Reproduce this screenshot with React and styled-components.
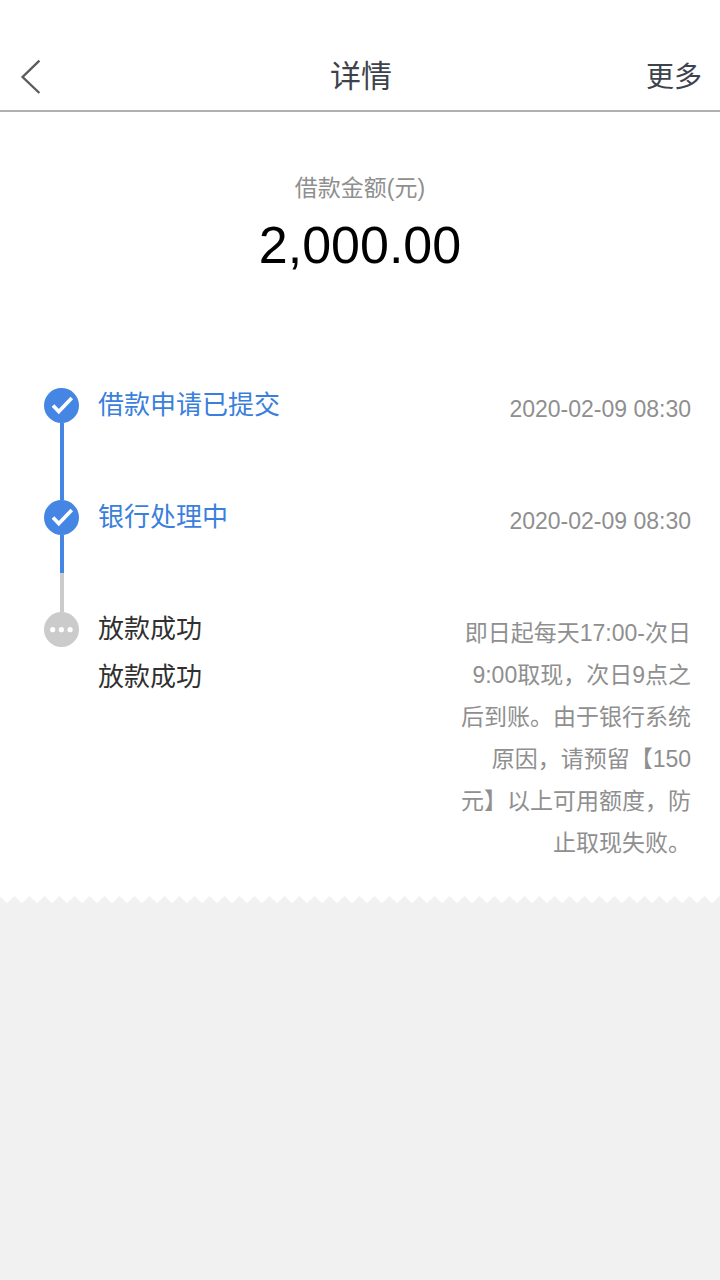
import React from 'react';
import styled, { createGlobalStyle } from 'styled-components';

const GlobalStyle = createGlobalStyle`
	* {
		box-sizing: border-box;
	}

	body {
		margin: 0;
		background-color: #f1f1f1;
		font-family: 'Liberation Sans', 'Noto Sans CJK SC', sans-serif;
	}
`;

const Sheet = styled.div`
	background-color: #fff;
	padding-bottom: 32px;
`;

const Header = styled.header`
	display: grid;
	grid-template-columns: 1fr auto 1fr;
	align-content: center;
	align-items: baseline;
	height: 112px;
	padding: 44px 18px 0 20px;
	border-bottom: 2px solid #b0b0b0;
`;

const HeaderButton = styled.button`
	display: flex;
	padding: 0;
	border: none;
	background: none;
	color: #3d434c;
	font-family: inherit;
	font-size: 28px;
	line-height: 40px;
	cursor: pointer;
`;

const BackButton = styled(HeaderButton)`
	align-self: center;
	justify-self: start;
`;

const MoreButton = styled(HeaderButton)`
	justify-self: end;
`;

const Title = styled.h1`
	margin: 0;
	color: #3d434c;
	font-size: 31px;
	font-weight: 400;
	line-height: 40px;
`;

const Summary = styled.section`
	display: flex;
	flex-direction: column;
	align-items: center;
	padding: 56px 0 108px;
`;

const AmountLabel = styled.div`
	color: #8f8f8f;
	font-size: 23px;
	line-height: 40px;
`;

const Amount = styled.div`
	color: #000;
	font-size: 52px;
	line-height: 74px;
`;

const Steps = styled.ol`
	margin: -2px 0 0;
	padding: 0 29px 0 44px;
	list-style: none;
`;

const Step = styled.li`
	display: flex;
	min-height: 112px;
`;

const Rail = styled.div`
	display: flex;
	flex-direction: column;
	align-items: center;
	width: 35px;
	margin-right: 19px;
`;

const Connector = styled.div`
	flex: 1;
	width: 4px;
	background: ${(props) =>
		props.$half ? 'linear-gradient(#4585e4 50%, #cbcbcb 50%)' : '#4585e4'};
`;

const StepNames = styled.div`
	flex: 1;
	color: ${(props) => (props.$done ? '#3a7fdd' : '#303030')};
	font-size: 26px;
	line-height: 48px;
	margin-top: -7px;
`;

const StepNote = styled.div`
	width: 230px;
	color: #8f8f8f;
	font-size: 23px;
	line-height: 42px;
	text-align: right;
`;

const Edge = styled.svg`
	display: block;
	width: 100%;
	height: 8px;
`;

const steps = [
	{ id: 1, names: ['借款申请已提交'], note: '2020-02-09 08:30', done: true, line: 'full' },
	{ id: 2, names: ['银行处理中'], note: '2020-02-09 08:30', done: true, line: 'half' },
	{
		id: 3,
		names: ['放款成功', '放款成功'],
		note: '即日起每天17:00-次日9:00取现，次日9点之后到账。由于银行系统原因，请预留【150元】以上可用额度，防止取现失败。',
		done: false,
	},
];

function BackIcon() {
	return (
		<svg width="22" height="36" viewBox="0 0 22 36" fill="none" stroke="#5c5c5c" strokeWidth="2.4">
			<path d="M19.4 1.6 L2.6 18 L19.4 34" />
		</svg>
	);
}

function Marker({ done }) {
	return (
		<svg width="35" height="35" viewBox="0 0 35 35">
			<circle cx="17.5" cy="17.5" r="17.5" fill={done ? '#4585e4' : '#cbcbcb'} />
			{done ? (
				<path d="M9 17.4 L14.8 23.6 L27.8 10" fill="none" stroke="#fff" strokeWidth="3.6" />
			) : (
				<g fill="#fff">
					<circle cx="8.7" cy="17.7" r="2.6" />
					<circle cx="17.4" cy="17.7" r="2.6" />
					<circle cx="26.1" cy="17.7" r="2.6" />
				</g>
			)}
		</svg>
	);
}

function TornEdge() {
	return (
		<Edge aria-hidden="true">
			<defs>
				<pattern id="teeth" width="15" height="8" patternUnits="userSpaceOnUse">
					<path d="M-0.5 0 L7 7.3 L14.5 0 L15 0.5 V0 Z" fill="#fff" />
				</pattern>
			</defs>
			<rect width="100%" height="8" fill="url(#teeth)" />
		</Edge>
	);
}

function StepItem({ step }) {
	return (
		<Step>
			<Rail>
				<Marker done={step.done} />
				{step.line && <Connector $half={step.line === 'half'} />}
			</Rail>
			<StepNames $done={step.done}>
				{step.names.map((name, index) => (
					<div key={index}>{name}</div>
				))}
			</StepNames>
			<StepNote>{step.note}</StepNote>
		</Step>
	);
}

function App() {
	return (
		<>
			<GlobalStyle />
			<Sheet>
				<Header>
					<BackButton type="button" aria-label="返回">
						<BackIcon />
					</BackButton>
					<Title>详情</Title>
					<MoreButton type="button">更多</MoreButton>
				</Header>
				<Summary>
					<AmountLabel>借款金额(元)</AmountLabel>
					<Amount>2,000.00</Amount>
				</Summary>
				<Steps>
					{steps.map((step) => (
						<StepItem key={step.id} step={step} />
					))}
				</Steps>
			</Sheet>
			<TornEdge />
		</>
	);
}

export default App;
